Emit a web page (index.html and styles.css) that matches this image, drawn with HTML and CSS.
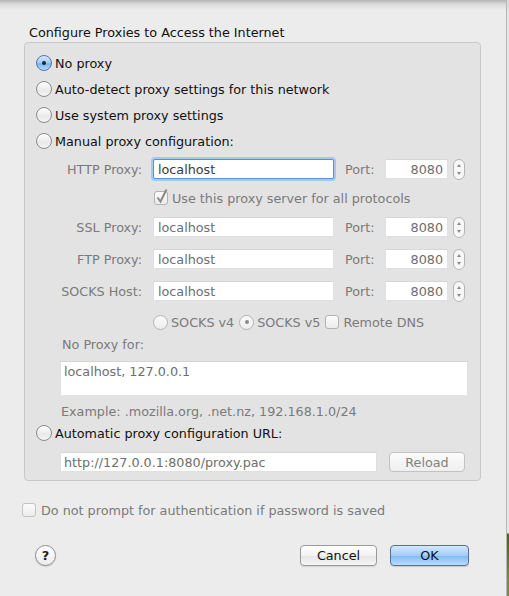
FILE: index.html
```html
<!DOCTYPE html>
<html>
<head>
<meta charset="utf-8">
<link rel="stylesheet" href="styles.css">
</head>
<body>
<div class="window">
  <div class="title">Configure Proxies to Access the Internet</div>
  <div class="group">
    <div class="radio-row"><span class="radio on"></span><span>No proxy</span></div>
    <div class="radio-row"><span class="radio"></span><span>Auto-detect proxy settings for this network</span></div>
    <div class="radio-row"><span class="radio"></span><span>Use system proxy settings</span></div>
    <div class="radio-row"><span class="radio"></span><span>Manual proxy configuration:</span></div>

    <div class="proxy-row first">
      <span class="plabel">HTTP Proxy:</span>
      <span class="field host focus">localhost</span>
      <span class="port-label">Port:</span>
      <span class="field port">8080</span>
      <span class="spinner"><svg width="12" height="21" viewBox="0 0 12 21"><rect x="0.5" y="0.5" width="11" height="20" rx="5.5" fill="#f7f7f7" stroke="#b4b4b4"/><path d="M4 8 L6 5 L8 8 Z" fill="#8c8c8c"/><path d="M4 13 L6 16 L8 13 Z" fill="#8c8c8c"/></svg></span>
    </div>
    <div class="check-row">
      <span class="checkbox"><svg width="16" height="17" viewBox="0 0 16 17"><path d="M3.5 9.5 L6.5 13.5 L12.5 1.5" fill="none" stroke="#8a8a8a" stroke-width="2"/></svg></span>
      <span class="dim">Use this proxy server for all protocols</span>
    </div>
    <div class="proxy-row after-check">
      <span class="plabel">SSL Proxy:</span>
      <span class="field host">localhost</span>
      <span class="port-label">Port:</span>
      <span class="field port">8080</span>
      <span class="spinner"><svg width="12" height="21" viewBox="0 0 12 21"><rect x="0.5" y="0.5" width="11" height="20" rx="5.5" fill="#f7f7f7" stroke="#b4b4b4"/><path d="M4 8 L6 5 L8 8 Z" fill="#8c8c8c"/><path d="M4 13 L6 16 L8 13 Z" fill="#8c8c8c"/></svg></span>
    </div>
    <div class="proxy-row">
      <span class="plabel">FTP Proxy:</span>
      <span class="field host">localhost</span>
      <span class="port-label">Port:</span>
      <span class="field port">8080</span>
      <span class="spinner"><svg width="12" height="21" viewBox="0 0 12 21"><rect x="0.5" y="0.5" width="11" height="20" rx="5.5" fill="#f7f7f7" stroke="#b4b4b4"/><path d="M4 8 L6 5 L8 8 Z" fill="#8c8c8c"/><path d="M4 13 L6 16 L8 13 Z" fill="#8c8c8c"/></svg></span>
    </div>
    <div class="proxy-row">
      <span class="plabel">SOCKS Host:</span>
      <span class="field host">localhost</span>
      <span class="port-label">Port:</span>
      <span class="field port">8080</span>
      <span class="spinner"><svg width="12" height="21" viewBox="0 0 12 21"><rect x="0.5" y="0.5" width="11" height="20" rx="5.5" fill="#f7f7f7" stroke="#b4b4b4"/><path d="M4 8 L6 5 L8 8 Z" fill="#8c8c8c"/><path d="M4 13 L6 16 L8 13 Z" fill="#8c8c8c"/></svg></span>
    </div>
    <div class="socks-row">
      <span class="radio off"></span><span class="dim">SOCKS v4</span>
      <span class="radio off sel"></span><span class="dim">SOCKS v5</span>
      <span class="checkbox small"></span><span class="dim">Remote DNS</span>
    </div>
    <div class="noproxy-label dim">No Proxy for:</div>
    <div class="textarea">localhost, 127.0.0.1</div>
    <div class="example dim">Example: .mozilla.org, .net.nz, 192.168.1.0/24</div>
    <div class="radio-row"><span class="radio"></span><span>Automatic proxy configuration URL:</span></div>
    <div class="url-row">
      <span class="field url">http://127.0.0.1:8080/proxy.pac</span>
      <span class="btn reload">Reload</span>
    </div>
  </div>
  <div class="auth-row">
    <span class="checkbox"></span><span class="dim">Do not prompt for authentication if password is saved</span>
  </div>
  <div class="buttons">
    <span class="help">?</span>
    <span class="spacer"></span>
    <span class="btn cancel">Cancel</span>
    <span class="btn ok">OK</span>
  </div>
</div>
<div class="desk"></div>
</body>
</html>
```
FILE: styles.css
```css
html, body {
  margin: 0;
  padding: 0;
}
body {
  display: flex;
  width: 509px;
  height: 596px;
  overflow: hidden;
  font-family: "DejaVu Sans", sans-serif;
  font-size: 12.75px;
  color: #111;
  background: #ececec;
}
.window {
  width: 506px;
  height: 596px;
  flex: none;
  border-right: 1px solid #b6b6b6;
  background: linear-gradient(#b4b4b4 0, #dadada 4px, #ececec 10px);
}
.desk {
  flex: 1;
  background: linear-gradient(#d8d8d8 0, #e6e6e6 12px, #e6e6e6 533px, #4f5e22 534px, #7a8b3a 580px);
}
.title {
  padding: 25px 0 0 29px;
  line-height: 15px;
  height: 15px;
}
.group {
  margin: 2px 0 0 24px;
  width: 457px;
  height: 439px;
  box-sizing: border-box;
  border: 1px solid #c8c8c8;
  border-radius: 4px;
  background: #e3e3e3;
  padding-top: 7px;
}
.radio-row {
  display: flex;
  align-items: center;
  height: 26px;
  padding-left: 11px;
  gap: 3px;
}
.radio {
  width: 16px;
  height: 16px;
  box-sizing: border-box;
  border-radius: 50%;
  border: 1px solid #8a8a8a;
  background: linear-gradient(#ffffff, #e9e9e9 60%, #f6f6f6);
  flex: none;
  position: relative;
}
.radio.on {
  border-color: #5a74a0;
  background: linear-gradient(#d6e8fb, #9ec9f4 50%, #78b4f0 55%, #b6dafa);
}
.radio.on::after {
  content: "";
  position: absolute;
  left: 5px;
  top: 5px;
  width: 4px;
  height: 4px;
  border-radius: 50%;
  background: #1b2534;
}
.radio.off {
  border-color: #b4b4b4;
  background: linear-gradient(#fafafa, #eeeeee);
}
.radio.sel::after {
  content: "";
  position: absolute;
  left: 5px;
  top: 5px;
  width: 4px;
  height: 4px;
  border-radius: 50%;
  background: #8a8a8a;
}
.dim {
  color: #7a7a7a;
}
.proxy-row {
  display: flex;
  align-items: center;
  height: 20px;
  margin-top: 12px;
  color: #7a7a7a;
}
.proxy-row.first {
  margin-top: 5px;
}
.proxy-row.after-check {
  margin-top: 0;
}
.plabel {
  width: 117px;
  text-align: right;
  flex: none;
}
.field {
  height: 20px;
  line-height: 20px;
  box-sizing: border-box;
  background: #fff;
  border: 1px solid #e0e0e0;
  border-top-color: #d6d6d6;
  color: #6e6e6e;
  flex: none;
}
.host {
  width: 181px;
  margin-left: 11px;
  padding-left: 4px;
}
.host.focus {
  color: #3a3a3a;
  border: 1px solid #5d8fd4;
  box-shadow: 0 0 0 2px #a7c8ee;
  border-radius: 2px;
}
.port-label {
  margin-left: 11px;
  width: 40px;
  flex: none;
}
.port {
  width: 63px;
  text-align: right;
  padding-right: 4px;
}
.spinner {
  margin-left: 5px;
  height: 21px;
  display: flex;
}
.check-row {
  display: flex;
  align-items: center;
  height: 38px;
  padding-left: 129px;
  gap: 4px;
}
.checkbox {
  width: 14px;
  height: 14px;
  box-sizing: border-box;
  border: 1px solid #b3b3b3;
  border-radius: 3px;
  background: linear-gradient(#fbfbfb, #ececec);
  flex: none;
  position: relative;
}
.checkbox svg {
  position: absolute;
  left: -1px;
  top: -4px;
}
.socks-row {
  display: flex;
  align-items: center;
  height: 20px;
  margin-top: 11px;
  padding-left: 128px;
}
.socks-row .radio {
  width: 15px;
  height: 15px;
  margin-right: 3px;
}
.socks-row .radio.sel::after {
  left: 4.5px;
  top: 4.5px;
}
.socks-row span:nth-child(2) {
  margin-right: 5px;
}
.socks-row span:nth-child(4) {
  margin-right: 5px;
}
.socks-row .checkbox {
  margin-right: 4px;
}
.noproxy-label {
  margin-top: 5px;
  padding-left: 37px;
  line-height: 16px;
}
.textarea {
  margin: 8px 0 0 35px;
  width: 408px;
  height: 35px;
  box-sizing: border-box;
  background: #fff;
  border: 1px solid #e2e2e2;
  border-top-color: #d4d4d4;
  padding: 2px 0 0 3px;
  line-height: 16px;
  color: #6e6e6e;
}
.example {
  margin-top: 8px;
  padding-left: 36px;
  line-height: 16px;
}
.url-row {
  display: flex;
  align-items: center;
  margin-top: 6px;
  padding-left: 35px;
  gap: 12px;
}
.url {
  width: 317px;
  padding-left: 3px;
}
.btn {
  display: flex;
  align-items: center;
  justify-content: center;
  box-sizing: border-box;
  border-radius: 4px;
  flex: none;
}
.reload {
  width: 76px;
  height: 20px;
  border: 1px solid #c2c2c2;
  background: linear-gradient(#fbfbfb, #efefef);
  color: #808080;
}
.auth-row {
  display: flex;
  align-items: center;
  height: 20px;
  margin-top: 19px;
  padding-left: 22px;
  gap: 5px;
}
.auth-row .checkbox {
  border-color: #c4c4c4;
}
.buttons {
  display: flex;
  align-items: center;
  height: 21px;
  margin-top: 25px;
  padding-left: 35px;
}
.help {
  width: 21px;
  height: 21px;
  box-sizing: border-box;
  border-radius: 50%;
  border: 1px solid #8e8e8e;
  background: linear-gradient(#ffffff, #ebebeb);
  box-shadow: 0 1px 1px rgba(0,0,0,0.15);
  display: flex;
  align-items: center;
  justify-content: center;
  font-weight: bold;
  font-size: 13px;
  color: #222;
}
.spacer {
  width: 244px;
}
.cancel {
  width: 77px;
  height: 21px;
  border: 1px solid #9b9b9b;
  background: linear-gradient(#ffffff, #f1f1f1 50%, #e6e6e6 51%, #f5f5f5);
  box-shadow: 0 1px 1px rgba(0,0,0,0.12);
  color: #111;
}
.ok {
  margin-left: 13px;
  width: 79px;
  height: 21px;
  border: 1px solid #5a6d9c;
  background: linear-gradient(#d3e8fc, #a3cdf6 50%, #7fbaf4 51%, #b9dcfc);
  box-shadow: 0 1px 1px rgba(0,0,0,0.15);
  color: #111;
}
```
